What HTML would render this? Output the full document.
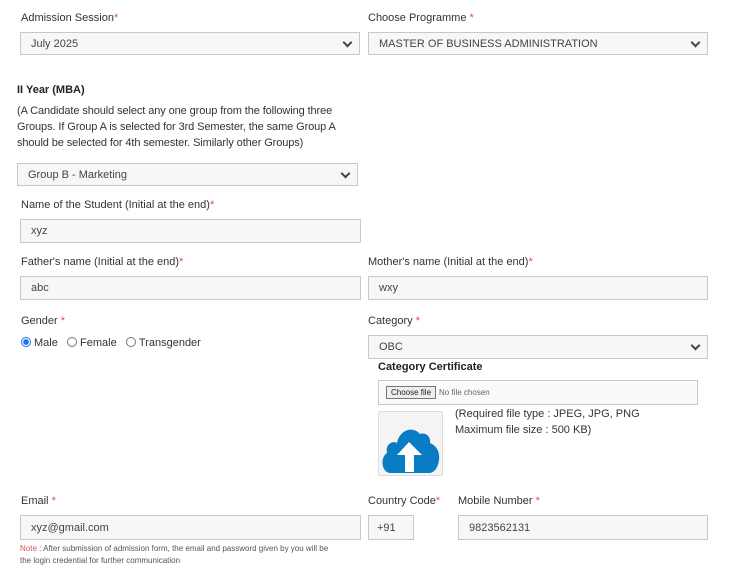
<!DOCTYPE html><html><head><style>
body{margin:0;width:733px;height:573px;background:#fff;font-family:"Liberation Sans",sans-serif;font-size:11px;color:#333;position:relative;overflow:hidden}
.a{position:absolute;white-space:nowrap}
.l{line-height:14px}
.r{color:#d9534f}
.box{position:absolute;background:#f7f7f7;border:1px solid #c8c8c8;box-sizing:border-box;padding-left:10px;display:flex;align-items:center;font-size:11px;color:#444;white-space:nowrap}
.sel::after{content:"";position:absolute;right:8px;top:50%;margin-top:-5px;width:5px;height:5px;border-right:2px solid #444;border-bottom:2px solid #444;transform:rotate(45deg)}
.rad{display:inline-block;width:8px;height:8px;border:1px solid #777;border-radius:50%;vertical-align:-1px;margin-right:3px}
</style></head><body>
<div class="a l" style="left:21px;top:11px">Admission Session<span class="r">*</span></div>
<div class="box sel" style="left:20px;top:32px;width:340px;height:23px">July 2025</div>
<div class="a l" style="left:368px;top:11px">Choose Programme <span class="r">*</span></div>
<div class="box sel" style="left:368px;top:32px;width:340px;height:23px">MASTER OF BUSINESS ADMINISTRATION</div>
<div class="a l" style="left:17px;top:83px;font-weight:bold;color:#222">II Year (MBA)</div>
<div class="a" style="left:17px;top:103px;line-height:16px;letter-spacing:-0.1px">(A Candidate should select any one group from the following three<br>Groups. If Group A is selected for 3rd Semester, the same Group A<br>should be selected for 4th semester. Similarly other Groups)</div>
<div class="box sel" style="left:17px;top:163px;width:341px;height:23px">Group B - Marketing</div>
<div class="a l" style="left:21px;top:198px">Name of the Student (Initial at the end)<span class="r">*</span></div>
<div class="box" style="left:20px;top:219px;width:341px;height:24px">xyz</div>
<div class="a l" style="left:21px;top:255px">Father's name (Initial at the end)<span class="r">*</span></div>
<div class="box" style="left:20px;top:276px;width:341px;height:24px">abc</div>
<div class="a l" style="left:368px;top:255px">Mother's name (Initial at the end)<span class="r">*</span></div>
<div class="box" style="left:368px;top:276px;width:340px;height:24px">wxy</div>
<div class="a l" style="left:21px;top:314px">Gender <span class="r">*</span></div>
<div class="a l" style="left:21px;top:336px"><span class="rad" style="border-color:#1a73e8;background:radial-gradient(#1a73e8 45%,#fff 55%)"></span>Male &nbsp;&nbsp;<span class="rad"></span>Female &nbsp;&nbsp;<span class="rad"></span>Transgender</div>
<div class="a l" style="left:368px;top:314px">Category <span class="r">*</span></div>
<div class="box sel" style="left:368px;top:335px;width:340px;height:24px">OBC</div>
<div class="a l" style="left:378px;top:360px;font-weight:bold;color:#222">Category Certificate</div>
<div class="box" style="left:378px;top:380px;width:320px;height:25px;background:#fafafa;padding-left:7px;font-size:8px;color:#666"><span style="border:1px solid #777;background:#eee;padding:1px 4px;color:#222;margin-right:3px">Choose file</span> No file chosen</div>
<div class="a" style="left:378px;top:411px;width:65px;height:65px;border:1px solid #ddd;border-radius:2px;box-sizing:border-box;background:#f4f4f4">
<svg width="63" height="63" viewBox="0 0 63 63"><path d="M12 61 C2 61 1 45 8 41 C6 33 13 28 18 31 C20 19 33 13 41 22 C47 20 52 25 51 31 C58 34 61 40 60 48 C59 56 55 61 50 61 Z" fill="#0a7cc4"/><path d="M30 30 L18 43 H26 V60 H35 V43 H43 Z" fill="#fff"/></svg></div>
<div class="a" style="left:455px;top:406px;line-height:16px">(Required file type : JPEG, JPG, PNG<br>Maximum file size : 500 KB)</div>
<div class="a l" style="left:21px;top:494px">Email <span class="r">*</span></div>
<div class="box" style="left:20px;top:515px;width:341px;height:25px">xyz@gmail.com</div>
<div class="a" style="left:20px;top:543px;font-size:8px;line-height:12px;color:#555"><span class="r">Note</span> : After submission of admission form, the email and password given by you will be<br>the login credential for further communication</div>
<div class="a l" style="left:368px;top:494px">Country Code<span class="r">*</span></div>
<div class="box" style="left:368px;top:515px;width:46px;height:25px;padding-left:8px">+91</div>
<div class="a l" style="left:458px;top:494px">Mobile Number <span class="r">*</span></div>
<div class="box" style="left:458px;top:515px;width:250px;height:25px">9823562131</div>
</body></html>
